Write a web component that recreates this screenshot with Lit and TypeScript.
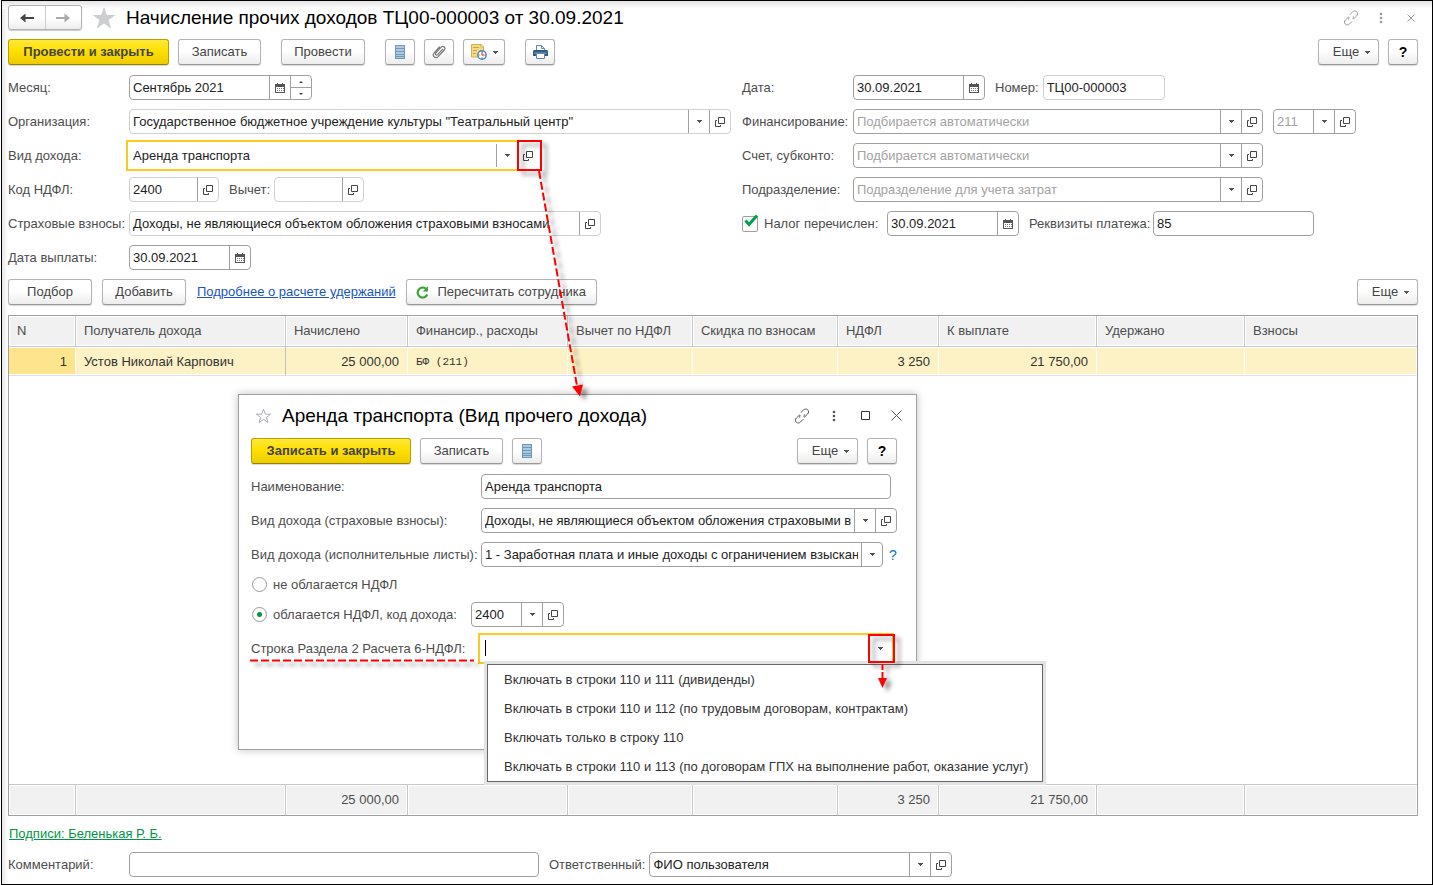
import { LitElement, html, svg, css, nothing, type TemplateResult } from "lit";
import { customElement, state } from "lit/decorators.js";
import { classMap } from "lit/directives/class-map.js";

type Part = "drop" | "open" | "calendar" | "spin";

interface FieldOptions {
  id: string;
  value?: string;
  placeholder?: string;
  size: string;
  parts?: Part[];
  readonly?: boolean;
  active?: boolean;
  label?: string;
}

interface Column {
  title: string;
  share: number;
  value: string;
  total?: string;
  numeric?: boolean;
  mono?: boolean;
}

const columns: Column[] = [
  { title: "N", share: 67, value: "1", numeric: true },
  { title: "Получатель дохода", share: 210, value: "Устов Николай Карпович" },
  { title: "Начислено", share: 122, value: "25 000,00", total: "25 000,00", numeric: true },
  { title: "Финансир., расходы", share: 160, value: "БФ (211)", mono: true },
  { title: "Вычет по НДФЛ", share: 125, value: "" },
  { title: "Скидка по взносам", share: 145, value: "" },
  { title: "НДФЛ", share: 101, value: "3 250", total: "3 250", numeric: true },
  { title: "К выплате", share: 158, value: "21 750,00", total: "21 750,00", numeric: true },
  { title: "Удержано", share: 148, value: "" },
  { title: "Взносы", share: 172, value: "" },
];

const rowOptions = [
  "Включать в строки 110 и 111 (дивиденды)",
  "Включать в строки 110 и 112 (по трудовым договорам, контрактам)",
  "Включать только в строку 110",
  "Включать в строки 110 и 113 (по договорам ГПХ на выполнение работ, оказание услуг)",
];

const icons = {
  drop: svg`<svg width="5" height="3" viewBox="0 0 5 3"><path d="M0 0h5v1H4v1H3v1H2V2H1V1H0z" fill="#555"/></svg>`,
  open: svg`<svg width="10" height="10" viewBox="0 0 10 10" fill="none" stroke="#444"><path d="M3.5 .5h6v6h-6z"/><path d="M2 3.500H.5v6h5V8"/></svg>`,
  calendar: svg`<svg width="10" height="10" viewBox="0 0 10 10"><path d="M0 1h2V0h1v1h4V0h1v1h2v9H0z" fill="#555"/><path d="M1 4h8v5H1z" fill="#fff"/><path d="M2 5h1v1H2zM4 5h1v1H4zM6 5h1v1H6zM2 7h1v1H2zM4 7h1v1H4zM6 7h1v1H6zM8 5h1v1H8zM8 7h1v1H8z" fill="#777"/></svg>`,
  back: svg`<svg width="14" height="10" viewBox="0 0 14 10"><path d="M0 5 5.500 .5V4H14v2H5.500v3.500z" fill="currentColor"/></svg>`,
  forward: svg`<svg width="14" height="10" viewBox="0 0 14 10"><path d="M14 5 8.500 .5V4H0v2h8.500v3.500z" fill="currentColor"/></svg>`,
  starFull: svg`<svg width="24" height="22" viewBox="0 0 24 22"><path d="M12 0l2.900 8H23.500l-7 5 2.700 8.500L12 16.400 4.800 21.500 7.500 13l-7-5h8.600z" fill="#ccced2"/></svg>`,
  starLine: svg`<svg width="17" height="16" viewBox="0 0 17 16"><path d="M8.500 1.200l1.900 5h5.200l-4.200 3.200 1.600 5.200-4.500-3.200L4 14.600l1.600-5.200L1.400 6.200h5.200z" fill="none" stroke="#a8acb4"/></svg>`,
  list: svg`<svg width="10" height="14" viewBox="0 0 10 14"><path d="M0 0h10v14H0z" fill="#6d98b8"/><path d="M1 1h8v2H1zM1 4h8v2H1zM1 7h8v2H1zM1 10h8v1H1zM1 12h8v1H1z" fill="#a9cae0"/></svg>`,
  clip: svg`<svg width="14" height="14" viewBox="0 0 14 14" fill="none" stroke="#777" stroke-width="1.200" stroke-linecap="round"><path d="M10.500 4.300 5.600 9.600c-.5.6-1.500.6-1.900 0-.4-.4-.4-1 0-1.500l5.500-6c.9-.9 2.300-.9 3.100-.1.8.8.8 2-.1 3l-6 6.600c-1.200 1.200-3 1.200-4.100.2-1-1-1-2.700.1-3.900L7.400 2"/></svg>`,
  note: svg`<svg width="16" height="16" viewBox="0 0 16 16"><path d="M.5.500h10l2 2V13H.500z" fill="#f4d987" stroke="#d8b04c"/><path d="M10 .5V3h2.500" fill="#fff" stroke="#d8b04c"/><path d="M2 3.500h6M2 6.500h4M2 9.500h3" stroke="#c8a24b"/><circle cx="11" cy="11" r="4.200" fill="#fff" stroke="#4d87b8" stroke-width="1.400"/><path d="M11 7.500v1M11 13.500v1M7.500 11h1M13.500 11h1" stroke="#345"/><path d="M11 11V8.500M11 11h2" stroke="#e02020"/></svg>`,
  print: svg`<svg width="15" height="14" viewBox="0 0 15 14"><path d="M3.500 6V.5h5l3 3V6" fill="#fff" stroke="#6789a8"/><path d="M8.500.5v3h3" fill="none" stroke="#6789a8"/><path d="M0 6.500C0 5.700.6 5 1.500 5h12c.9 0 1.500.7 1.500 1.500V11H0z" fill="#2f5a82"/><path d="M1 7.500h13v1H1z" fill="#7fa3c2"/><path d="M3.500 8.500h8v5h-8z" fill="#fff" stroke="#6789a8"/></svg>`,
  refresh: svg`<svg width="13" height="13" viewBox="0 0 13 13"><path d="M11.300 8.500A5 5 0 1 1 9.800 2.600" fill="none" stroke="#3aa535" stroke-width="2.200"/><path d="M12 0v5.500H6.800z" fill="#3aa535"/></svg>`,
  link: svg`<svg width="16" height="16" viewBox="0 0 16 16" fill="none" stroke="currentColor" stroke-linecap="round"><path d="M7 4.500 9.500 2c1.200-1.200 3-1.300 4.200-.2 1.200 1.200 1.100 3-.1 4.200L10.500 9M6 7.500c-.4.600-.500 1.200-.3 1.800M9 11.500 6.500 14c-1.200 1.200-3 1.300-4.200.2-1.200-1.200-1.100-3 .1-4.200L5.500 7M10 8.500c.4-.6.500-1.200.3-1.800"/></svg>`,
  dots: svg`<svg width="4" height="12" viewBox="0 0 4 12" fill="currentColor"><circle cx="2" cy="2" r="1.300"/><circle cx="2" cy="6" r="1.300"/><circle cx="2" cy="10" r="1.300"/></svg>`,
  max: svg`<svg width="9" height="9" viewBox="0 0 9 9" fill="none" stroke="#333"><path d="M.5.500h8v8h-8z"/></svg>`,
  closeSmall: svg`<svg width="8" height="8" viewBox="0 0 8 8" stroke="currentColor" fill="none"><path d="M.5.500l7 7M7.500.500l-7 7"/></svg>`,
  close: svg`<svg width="11" height="11" viewBox="0 0 11 11" stroke="currentColor" fill="none"><path d="M.5.500l10 10M10.500.500l-10 10"/></svg>`,
  tick: svg`<svg width="16" height="15" viewBox="0 0 16 15"><path d="M2.500 6.500 6 10.500 14 1.500" fill="none" stroke="#00a050" stroke-width="3"/></svg>`,
};

@customElement("app-root")
export class AppRoot extends LitElement {
  @state() private taxable = true;

  static styles = css`
    :host {
      display: block;
      box-sizing: border-box;
      min-height: 100vh;
      padding-left: 1px;
      background: #fff;
      color: #333;
      font: 13px/16px "Liberation Sans", Arial, sans-serif;
    }
    *, *::before, *::after { box-sizing: border-box; }
    svg { display: block; flex: none; }
    .page {
      position: relative;
      display: flex;
      flex-direction: column;
      min-height: 100vh;
      padding: 4px 14px 7px 6px;
      border: 1px solid #000;
      background:
        linear-gradient(to bottom, #e4e4e4, #fff) top / 100% 8px no-repeat,
        linear-gradient(to right, #e8e8e8, #fff) left / 6px 100% no-repeat,
        #fff;
    }
    button, input, select { font: inherit; color: inherit; margin: 0; }
    button { padding: 0; cursor: pointer; }
    .titlebar, .toolbar, .row, .foot { display: flex; align-items: center; }
    .titlebar { height: 25px; margin-bottom: 9px; color: #999; }
    .nav { display: flex; width: 74px; height: 25px; border: 1px solid #b0b0b0; border-radius: 3px; box-shadow: 0 1px 1px #ccc; background: linear-gradient(#fff 50%, #eee); }
    .nav button { flex: 1; display: grid; place-items: center; border: 0; background: none; color: #444; }
    .nav button + button { border-left: 1px solid #ccc; color: #aaa; }
    .titlebar .plain { display: grid; place-items: center; height: 24px; border: 0; background: none; }
    .star { margin-left: 10px; }
    h1, h2 { margin: 0 auto 0 10px; font-size: 19px; line-height: 24px; font-weight: 400; color: #000; white-space: nowrap; }
    .corner { display: grid; grid-template-columns: 16px 44px 16px; justify-items: center; margin-right: -1px; }
    .toolbar { gap: 9px; height: 26px; }
    .btn {
      display: inline-flex; align-items: center; justify-content: center;
      height: 26px; min-width: 30px; border: 1px solid #b4b4b4; border-bottom-color: #999;
      border-radius: 3px; background: linear-gradient(#fff 45%, #ececec);
      box-shadow: 0 1px 1px #d8d8d8; color: #444; white-space: nowrap;
    }
    .w84 { width: 84px; }
    .primary {
      width: 161px; font-weight: 700; color: #444;
      border-color: #b8a000; border-bottom-color: #968200;
      background: linear-gradient(#ffe83a, #ffe000 45%, #edcb00);
    }
    .more { width: 61px; gap: 6px; padding-left: 6px; margin-left: auto; }
    .note { width: 42px; gap: 6px; }
    .help { font-weight: 700; color: #000; font-size: 14px; }
    .space { margin-left: 11px; }
    .form { display: grid; grid-template-columns: minmax(0, 723fr) minmax(0, 676fr); gap: 11px; margin: 10px 0 9px; }
    .stack { display: flex; flex-direction: column; gap: 9px; min-width: 0; }
    .row { height: 25px; min-width: 0; }
    label, .label { flex: none; color: #4d4d4d; white-space: nowrap; }
    .left > .row > label:first-child { width: 121px; }
    .right > .row > label:first-child { width: 111px; }
    .mid { margin: 0 4px 0 10px; }
    .field { position: relative; display: flex; flex: none; height: 25px; border: 1px solid #a0a0a0; border-radius: 4px; background: #fff; }
    .field.readonly { border-color: #d0d0d0; }
    .field.active { border-color: #fff; border-radius: 0; outline: 2px solid #f9cb1d; outline-offset: 1px; }
    .field input, .field select {
      flex: 1; width: 0; min-width: 0; height: 23px; padding: 0 3px; border: 0; outline: 0;
      background: none; color: #222; appearance: none; overflow: hidden; white-space: nowrap; text-overflow: clip;
    }
    .field input::placeholder { color: #a3a3a3; opacity: 1; }
    .part { display: grid; place-items: center; flex: none; width: 21px; height: 23px; border: 0; border-left: 1px solid #a0a0a0; background: none; }
    .spin { display: grid; width: 21px; border-left: 1px solid #a0a0a0; }
    .spin button { display: grid; place-items: center; border: 0; background: none; }
    .spin button + button { border-top: 1px solid #a0a0a0; }
    .tri { width: 0; height: 0; border: 2px solid transparent; border-top: 2px solid #444; border-bottom: 0; }
    .tri.up { transform: rotate(180deg); }
    .field.fill { flex: 1; }
    .w83 { width: 83px; }
    .w90 { width: 90px; }
    .w93 { width: 93px; }
    .w122 { width: 122px; }
    .w132 { width: 132px; }
    .w161 { width: 161px; }
    .w183 { width: 183px; }
    .w303 { width: 303px; }
    .w402 { width: 402px; }
    .w410 { width: 410px; }
    .w416 { width: 416px; }
    .w472 { width: 472px; }
    .gap { margin-left: 10px; }
    .check { position: relative; width: 16px; height: 16px; margin-right: 6px; }
    .check input { appearance: none; width: 16px; height: 16px; margin: 0; border: 1px solid #a0a0a0; border-radius: 2px; background: #fff; display: block; }
    .check svg { position: absolute; left: 1px; top: -2px; pointer-events: none; }
    .paid { width: 123px; }
    .details { width: 124px; margin-left: 10px; }
    .lower { gap: 10px; height: 26px; margin-bottom: 10px; }
    a { color: #1a55c0; white-space: nowrap; }
    .lower a { margin-left: 1px; }
    .lower .recalc { width: 191px; gap: 8px; }
    .grid { flex: 1; display: grid; min-height: 240px; border: 1px solid #a0a0a0; }
    table { width: 100%; height: 100%; table-layout: fixed; border-collapse: separate; border-spacing: 0; }
    th, td { padding: 0 8px; text-align: left; font-weight: 400; white-space: nowrap; overflow: hidden; }
    th, tfoot td { height: 31px; color: #4d4d4d; background: #f1f1f1; border-right: 1px solid #c8c8c8; box-shadow: inset 0 0 0 1px #fff; }
    th { border-bottom: 1px solid #c8c8c8; }
    tfoot td { border-top: 1px solid #c8c8c8; }
    th:last-child, tfoot td:last-child { border-right: 0; }
    .data td { height: 29px; padding-top: 2px; background: #fdf1c6; border-right: 1px solid #fff; border-bottom: 1px solid #e0e0e0; box-shadow: inset 0 1px #fff, inset 0 -1px #fff; color: #333; }
    .data td:first-child { background: #ffe48e; }
    .data td:nth-child(2) { border-right-color: #c0c0c0; }
    td.num { text-align: right; }
    .data td.mono { font-family: "Liberation Mono", "Courier New", monospace; font-size: 11px; }
    .sign { align-self: flex-start; margin: 10px 0 10px 1px; color: #009646; }
    .foot > label:first-child { width: 121px; }
    .dialog {
      position: absolute; left: 236px; top: 393px; width: 679px; height: 356px;
      padding: 8px 19px 0 12px; background: #fff; border: 1px solid #a0a0a0;
      box-shadow: 0 0 8px rgba(0, 0, 0, .25);
    }
    .dialog .titlebar { margin-bottom: 10px; color: #555; }
    .dialog .star { margin-left: 4px; }
    .dialog .corner { grid-template-columns: 16px 48px 15px 46px; margin-right: -22px; }
    .dialog .primary { width: 160px; }
    .dialog .stack { margin-top: 10px; }
    .dialog .stack > .row > label:first-child { width: 230px; }
    .dialog .stack > .radio { height: 17px; gap: 6px; }
    .dialog .stack > .radio.tall { height: 25px; }
    .radio input[type="radio"] { appearance: none; flex: none; width: 15px; height: 15px; margin-left: 1px; border: 1px solid #999; border-radius: 50%; background: #fff; }
    .radio input[type="radio"]:checked { background: radial-gradient(circle, #009646 2px, #fff 3px); }
    .radio .code { width: 192px; }
    .hint { margin-left: 6px; color: #0a78c0; border: 0; background: none; font-size: 14px; }
    .active .bare { border-left-color: transparent; }
    .caret { position: absolute; left: 3px; top: 3px; width: 1px; height: 16px; background: #000; }
    .popup {
      position: absolute; z-index: 1; left: 5px; top: 27px; margin: 0; padding: 0; list-style: none;
      width: 556px; background: #fff; border: 1px solid #666; box-shadow: 0 0 0 3px #e3e3e3;
    }
    .popup li { height: 29px; padding: 0 16px; line-height: 29px; color: #333; white-space: nowrap; }
    .marks { position: absolute; left: -2px; top: -1px; z-index: 2; pointer-events: none; overflow: visible; }
  `;

  private part(kind: Part): TemplateResult {
    if (kind === "spin") {
      return html`<span class="spin">
        <button aria-label="Следующий"><span class="tri up"></span></button>
        <button aria-label="Предыдущий"><span class="tri"></span></button>
      </span>`;
    }
    const names = { drop: "Выбрать из списка", open: "Открыть", calendar: "Календарь" };
    return html`<button class="part" aria-label=${names[kind]}>${icons[kind]}</button>`;
  }

  private field(o: FieldOptions): TemplateResult {
    const classes = { field: true, [o.size]: true, readonly: !!o.readonly, active: !!o.active };
    return html`<div class=${classMap(classes)}>
      <input id=${o.id} type="text" .value=${o.value ?? ""} placeholder=${o.placeholder ?? nothing}
        aria-label=${o.label ?? nothing} ?readonly=${!!o.readonly} spellcheck="false" autocomplete="off" />
      ${(o.parts ?? []).map((p) => this.part(p))}
    </div>`;
  }

  private labelled(text: string, o: FieldOptions): TemplateResult {
    return html`<div class="row"><label for=${o.id}>${text}</label>${this.field(o)}</div>`;
  }

  private renderForm() {
    return html`<div class="form">
      <div class="stack left">
        ${this.labelled("Месяц:", { id: "month", value: "Сентябрь 2021", size: "w183", parts: ["calendar", "spin"] })}
        ${this.labelled("Организация:", { id: "org", value: 'Государственное бюджетное учреждение культуры "Театральный центр"', size: "fill", parts: ["drop", "open"], readonly: true })}
        ${this.labelled("Вид дохода:", { id: "kind", value: "Аренда транспорта", size: "w410", parts: ["drop", "open"], active: true })}
        <div class="row">
          <label for="code">Код НДФЛ:</label>
          ${this.field({ id: "code", value: "2400", size: "w90", parts: ["open"], readonly: true })}
          <label class="mid" for="deduct">Вычет:</label>
          ${this.field({ id: "deduct", size: "w90", parts: ["open"], readonly: true })}
        </div>
        ${this.labelled("Страховые взносы:", { id: "insurance", value: "Доходы, не являющиеся объектом обложения страховыми взносами", size: "w472", parts: ["open"], readonly: true })}
        ${this.labelled("Дата выплаты:", { id: "paydate", value: "30.09.2021", size: "w122", parts: ["calendar"] })}
      </div>
      <div class="stack right">
        <div class="row">
          <label for="date">Дата:</label>
          ${this.field({ id: "date", value: "30.09.2021", size: "w132", parts: ["calendar"] })}
          <label class="mid" for="number">Номер:</label>
          ${this.field({ id: "number", value: "ТЦ00-000003", size: "w122", readonly: true })}
        </div>
        <div class="row">
          <label for="funding">Финансирование:</label>
          ${this.field({ id: "funding", placeholder: "Подбирается автоматически", size: "w410", parts: ["drop", "open"] })}
          <span class="gap">${this.field({ id: "kosgu", placeholder: "211", size: "w83", parts: ["drop", "open"], label: "КОСГУ" })}</span>
        </div>
        ${this.labelled("Счет, субконто:", { id: "account", placeholder: "Подбирается автоматически", size: "w410", parts: ["drop", "open"] })}
        ${this.labelled("Подразделение:", { id: "unit", placeholder: "Подразделение для учета затрат", size: "w410", parts: ["drop", "open"] })}
        <div class="row">
          <span class="check"><input id="paid" type="checkbox" checked />${icons.tick}</span>
          <label class="paid" for="paid">Налог перечислен:</label>
          ${this.field({ id: "paidate", value: "30.09.2021", size: "w132", parts: ["calendar"], label: "Дата перечисления" })}
          <label class="details" for="details">Реквизиты платежа:</label>
          ${this.field({ id: "details", value: "85", size: "w161" })}
        </div>
      </div>
    </div>`;
  }

  private renderTable() {
    const total = columns.reduce((sum, c) => sum + c.share, 0);
    return html`<div class="grid"><table>
      <colgroup>${columns.map((c) => html`<col style="width:${(c.share / total) * 100}%" />`)}</colgroup>
      <thead><tr>${columns.map((c) => html`<th scope="col">${c.title}</th>`)}</tr></thead>
      <tbody>
        <tr class="data">${columns.map((c) => html`<td class=${classMap({ num: !!c.numeric, mono: !!c.mono })}>${c.value}</td>`)}</tr>
        <tr><td colspan=${columns.length}></td></tr>
      </tbody>
      <tfoot><tr>${columns.map((c) => html`<td class=${classMap({ num: !!c.numeric })}>${c.total ?? ""}</td>`)}</tr></tfoot>
    </table></div>`;
  }

  private renderDialog() {
    return html`<section class="dialog" role="dialog" aria-labelledby="dialog-title">
      <div class="titlebar">
        <button class="plain star" aria-label="Избранное">${icons.starLine}</button>
        <h2 id="dialog-title">Аренда транспорта (Вид прочего дохода)</h2>
        <div class="corner">
          <button class="plain" aria-label="Ссылка">${icons.link}</button>
          <button class="plain" aria-label="Меню">${icons.dots}</button>
          <button class="plain" aria-label="Развернуть">${icons.max}</button>
          <button class="plain" aria-label="Закрыть">${icons.close}</button>
        </div>
      </div>
      <div class="toolbar">
        <button class="btn primary">Записать и закрыть</button>
        <button class="btn w83">Записать</button>
        <button class="btn" aria-label="Список">${icons.list}</button>
        <button class="btn more">Еще ${icons.drop}</button>
        <button class="btn help" aria-label="Справка">?</button>
      </div>
      <div class="stack">
        ${this.labelled("Наименование:", { id: "name", value: "Аренда транспорта", size: "w410" })}
        ${this.labelled("Вид дохода (страховые взносы):", { id: "ins-kind", value: "Доходы, не являющиеся объектом обложения страховыми взносами", size: "w416", parts: ["drop", "open"] })}
        <div class="row">
          <label for="exec-kind">Вид дохода (исполнительные листы):</label>
          <div class="field w402">
            <select id="exec-kind"><option>1 - Заработная плата и иные доходы с ограничением взыскания</option></select>
            <span class="part">${icons.drop}</span>
          </div>
          <button class="hint" aria-label="Подсказка">?</button>
        </div>
        <div class="row radio">
          <input id="tax-no" type="radio" name="tax" .checked=${!this.taxable} @change=${() => (this.taxable = false)} />
          <label class="label" for="tax-no">не облагается НДФЛ</label>
        </div>
        <div class="row radio tall">
          <input id="tax-yes" type="radio" name="tax" .checked=${this.taxable} @change=${() => (this.taxable = true)} />
          <label class="code" for="tax-yes">облагается НДФЛ, код дохода:</label>
          ${this.field({ id: "tax-code", value: "2400", size: "w93", parts: ["drop", "open"], label: "Код дохода" })}
        </div>
        <div class="row">
          <label for="line">Строка Раздела 2 Расчета 6-НДФЛ:</label>
          <div class="field w410 active">
            <input id="line" type="text" role="combobox" aria-expanded="true" aria-controls="lines" />
            <span class="caret"></span>
            <button class="part bare" aria-label="Выбрать из списка">${icons.drop}</button>
            <ul class="popup" id="lines" role="listbox">
              ${rowOptions.map((text) => html`<li role="option">${text}</li>`)}
            </ul>
          </div>
        </div>
      </div>
    </section>`;
  }

  private renderMarks() {
    return svg`<svg class="marks" width="1050" height="700" viewBox="0 0 1050 700" fill="none" stroke="#f00" aria-hidden="true">
      <defs><filter id="soft" filterUnits="userSpaceOnUse" x="0" y="0" width="1050" height="720"><feDropShadow dx="5" dy="4" stdDeviation="2" flood-color="#000" flood-opacity=".4"/></filter></defs>
      <g filter="url(#soft)">
        <path d="M518 141h23v29h-23z" stroke-width="2"/>
        <path d="M539 171 577 386" stroke-width="2" stroke-dasharray="8 3"/>
        <path d="M572 386.500l11-2-3 12z" fill="#f00" stroke="none"/>
        <path d="M250 660.500h224" stroke-width="2" stroke-dasharray="8 3"/>
        <path d="M869 635h25v27h-25z" stroke-width="2"/>
        <path d="M882.500 664v14" stroke-width="2" stroke-dasharray="6 2"/>
        <path d="M878 678h9l-4.500 10z" fill="#f00" stroke="none"/>
      </g>
    </svg>`;
  }

  render() {
    return html`<main class="page">
      <header class="titlebar">
        <div class="nav">
          <button aria-label="Назад">${icons.back}</button>
          <button aria-label="Вперед">${icons.forward}</button>
        </div>
        <button class="plain star" aria-label="Избранное">${icons.starFull}</button>
        <h1>Начисление прочих доходов ТЦ00-000003 от 30.09.2021</h1>
        <div class="corner">
          <button class="plain" aria-label="Ссылка">${icons.link}</button>
          <button class="plain" aria-label="Меню">${icons.dots}</button>
          <button class="plain" aria-label="Закрыть">${icons.closeSmall}</button>
        </div>
      </header>
      <div class="toolbar">
        <button class="btn primary">Провести и закрыть</button>
        <button class="btn w83">Записать</button>
        <button class="btn w84 space">Провести</button>
        <button class="btn space" aria-label="Список">${icons.list}</button>
        <button class="btn" aria-label="Файлы">${icons.clip}</button>
        <button class="btn note" aria-label="Отложить">${icons.note}${icons.drop}</button>
        <button class="btn space" aria-label="Печать">${icons.print}</button>
        <button class="btn more">Еще ${icons.drop}</button>
        <button class="btn help" aria-label="Справка">?</button>
      </div>
      ${this.renderForm()}
      <div class="toolbar lower">
        <button class="btn w84">Подбор</button>
        <button class="btn w84">Добавить</button>
        <a href="#details">Подробнее о расчете удержаний</a>
        <button class="btn recalc">${icons.refresh} Пересчитать сотрудника</button>
        <button class="btn more">Еще ${icons.drop}</button>
      </div>
      ${this.renderTable()}
      <a class="sign" href="#signatures">Подписи: Беленькая Р. Б.</a>
      <div class="foot">
        <label for="comment">Комментарий:</label>
        ${this.field({ id: "comment", size: "w410" })}
        <label class="mid" for="owner">Ответственный:</label>
        ${this.field({ id: "owner", value: "ФИО пользователя", size: "w303", parts: ["drop", "open"] })}
      </div>
      ${this.renderDialog()}
      ${this.renderMarks()}
    </main>`;
  }
}
